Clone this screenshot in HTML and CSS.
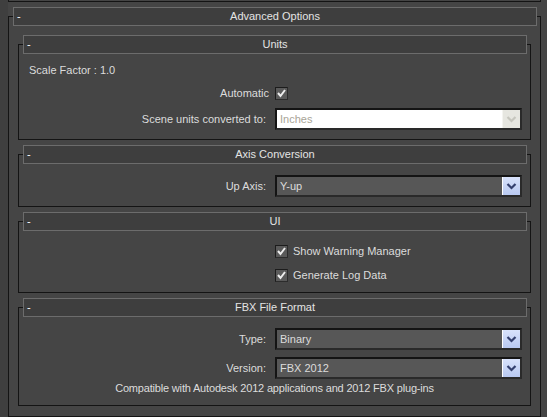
FILE: index.html
```html
<!DOCTYPE html>
<html>
<head>
<meta charset="utf-8">
<link rel="stylesheet" href="styles.css">
</head>
<body>
<div class="prev"></div>
<div class="rollout outer">
  <div class="rhead"><span class="minus">-</span><span class="title">Advanced Options</span><span></span></div>
  <div class="rframe outer-frame">

    <div class="rollout inner">
      <div class="rhead"><span class="minus">-</span><span class="title">Units</span><span></span></div>
      <div class="rframe units">
        <div class="plain">Scale Factor : 1.0</div>
        <div class="row row-check"><span class="label">Automatic</span><span class="cb"><svg width="11" height="11" viewBox="0 0 11 11"><path d="M2 5 L4.5 8 L9 2" fill="none" stroke="#eeeeee" stroke-width="2"/></svg></span></div>
        <div class="row row-combo"><span class="label">Scene units converted to:</span><div class="combo disabled"><span class="val">Inches</span><span class="btn"><svg width="15" height="16" viewBox="0 0 15 16"><path d="M3.5 6 L7.5 10 L11.5 6" fill="none" stroke="#c6c6be" stroke-width="2.2"/></svg></span></div></div>
      </div>
    </div>

    <div class="rollout inner">
      <div class="rhead"><span class="minus">-</span><span class="title">Axis Conversion</span><span></span></div>
      <div class="rframe axis">
        <div class="row row-combo"><span class="label">Up Axis:</span><div class="combo"><span class="val">Y-up</span><span class="btn"><svg width="15" height="16" viewBox="0 0 15 16"><path d="M3.5 6 L7.5 10 L11.5 6" fill="none" stroke="#34406e" stroke-width="2.2"/></svg></span></div></div>
      </div>
    </div>

    <div class="rollout inner">
      <div class="rhead"><span class="minus">-</span><span class="title">UI</span><span></span></div>
      <div class="rframe ui">
        <div class="row row-opt first"><span class="spacer"></span><span class="cb"><svg width="11" height="11" viewBox="0 0 11 11"><path d="M2 5 L4.5 8 L9 2" fill="none" stroke="#eeeeee" stroke-width="2"/></svg></span><span class="opt">Show Warning Manager</span></div>
        <div class="row row-opt second"><span class="spacer"></span><span class="cb"><svg width="11" height="11" viewBox="0 0 11 11"><path d="M2 5 L4.5 8 L9 2" fill="none" stroke="#eeeeee" stroke-width="2"/></svg></span><span class="opt">Generate Log Data</span></div>
      </div>
    </div>

    <div class="rollout inner">
      <div class="rhead"><span class="minus">-</span><span class="title">FBX File Format</span><span></span></div>
      <div class="rframe fbx">
        <div class="row row-combo type"><span class="label">Type:</span><div class="combo"><span class="val">Binary</span><span class="btn"><svg width="15" height="16" viewBox="0 0 15 16"><path d="M3.5 6 L7.5 10 L11.5 6" fill="none" stroke="#34406e" stroke-width="2.2"/></svg></span></div></div>
        <div class="row row-combo version"><span class="label">Version:</span><div class="combo"><span class="val">FBX 2012</span><span class="btn"><svg width="15" height="16" viewBox="0 0 15 16"><path d="M3.5 6 L7.5 10 L11.5 6" fill="none" stroke="#34406e" stroke-width="2.2"/></svg></span></div></div>
        <div class="compat">Compatible with Autodesk 2012 applications and 2012 FBX plug-ins</div>
      </div>
    </div>

  </div>
</div>
</body>
</html>
```

FILE: styles.css
```css
html, body {
  margin: 0;
  padding: 0;
}
body {
  width: 547px;
  height: 417px;
  overflow: hidden;
  background: linear-gradient(to right, #3f3f3f 0, #3f3f3f 8px, #454545 8px);
  font-family: "Liberation Sans", Arial, sans-serif;
  font-size: 11px;
  color: #dcdcdc;
}
.prev {
  margin-left: 8px;
  width: 531px;
  height: 1px;
  border: 1px solid #141414;
  border-top: none;
  background: #454545;
}
.rollout {
  display: flex;
  flex-direction: column;
}
.outer {
  margin: 5px 0 0 8px;
  width: 533px;
}
.rhead {
  position: relative;
  z-index: 1;
  height: 19px;
  box-sizing: border-box;
  margin: 0 4px 0 5px;
  border: 1px solid #6c6c6c;
  background: #3e3e3e;
  display: grid;
  grid-template-columns: 1fr auto 1fr;
  align-items: center;
  line-height: 15px;
}
.minus {
  padding-left: 3px;
  color: #ffffff;
}
.title {
  color: #e4e4e4;
}
.rframe {
  margin-top: -10px;
  border: 1px solid #141414;
  padding-top: 9px;
  display: flex;
  flex-direction: column;
}
.outer-frame {
  padding-bottom: 10px;
}
.inner {
  margin: 5px 9px 0 9px;
}
.outer-frame > .inner:first-child {
  margin-top: 9px;
}
.plain {
  margin: 9px 0 0 10px;
  height: 14px;
  line-height: 14px;
}
.row {
  display: flex;
  align-items: center;
}
.label {
  text-align: right;
  line-height: 14px;
}
.row-check {
  margin-top: 9px;
  height: 14px;
}
.row-check .label {
  width: 250px;
  margin-right: 6px;
}
.row-combo {
  height: 22px;
}
.row-combo .label {
  width: 247px;
  margin-right: 9px;
}
.units .row-combo {
  margin-top: 8px;
  margin-bottom: 9px;
}
.axis .row-combo {
  margin-top: 11px;
  margin-bottom: 9px;
}
.cb {
  width: 13px;
  height: 13px;
  box-sizing: border-box;
  border: 1px solid #1c1c1c;
  border-right-color: #2c2c2c;
  border-bottom-color: #2c2c2c;
  background: #5a5a5a;
  display: flex;
  align-items: center;
  justify-content: center;
}
.combo {
  width: 247px;
  height: 22px;
  box-sizing: border-box;
  border: 2px solid #141414;
  border-right-color: #2a2a2a;
  border-bottom-color: #2a2a2a;
  background: #575757;
  display: flex;
  align-items: stretch;
}
.combo .val {
  flex: 1;
  padding-left: 3px;
  line-height: 18px;
  color: #dcdcdc;
}
.combo .btn {
  width: 17px;
  border-left: 1px solid #ffffff;
  background: linear-gradient(to bottom, #d8e2fb, #b9c9f1);
  display: flex;
  align-items: center;
  justify-content: center;
}
.combo.disabled {
  background: #ffffff;
}
.combo.disabled .val {
  color: #a9a597;
}
.combo.disabled .btn {
  background: #e6e6e0;
  border-left: 1px solid #f4f4f0;
}
.row-opt {
  height: 14px;
}
.row-opt .spacer {
  width: 256px;
}
.row-opt .opt {
  margin-left: 5px;
  line-height: 14px;
}
.row-opt.first {
  margin-top: 13px;
}
.row-opt.second {
  margin-top: 10px;
  margin-bottom: 10px;
}
.fbx .type {
  margin-top: 11px;
}
.fbx .version {
  margin-top: 7px;
}
.compat {
  margin-top: 2px;
  margin-bottom: 10px;
  height: 14px;
  line-height: 14px;
  text-align: center;
  letter-spacing: -0.18px;
}
```
